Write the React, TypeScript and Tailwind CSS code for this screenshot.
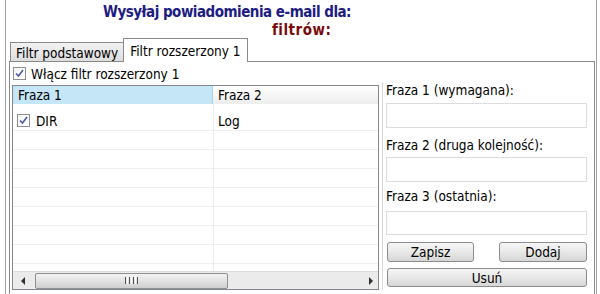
import React from "react";

const F = { fontFamily: '"DejaVu Sans Condensed", "DejaVu Sans", sans-serif' };

function Check() {
  return (
    <div className="w-[13px] h-[13px] border border-[#8f8f8f] bg-gradient-to-br from-[#f4f4f4] to-white flex items-center justify-center shrink-0">
      <svg width="9" height="9" viewBox="0 0 9 9">
        <path d="M1 4.5 L3.5 7 L8 1" stroke="#4a5ba8" strokeWidth="1.6" fill="none" />
      </svg>
    </div>
  );
}

function Btn({ children, className }: { children: React.ReactNode; className?: string }) {
  return (
    <div
      className={
        "border border-[#8c8c8c] rounded-[3px] bg-gradient-to-b from-[#f6f6f6] via-[#e8e8e8] to-[#d6d6d6] flex items-center justify-center text-black " +
        (className || "")
      }
    >
      {children}
    </div>
  );
}

export default function App() {
  const rows = [1, 2, 3, 4, 5, 6, 7, 8];
  return (
    <div style={F} className="w-[600px] h-[294px] bg-white overflow-hidden text-[13.5px] leading-[16px] text-black">
      <div className="ml-[5px] mr-[3px] h-full border-l border-r border-[#a0a0a0] flex flex-col">
        <div className="h-[38px] shrink-0 relative font-bold text-[15px] leading-[15px]">
          <div className="absolute left-[97px] top-[5px] text-[#1c1c84] tracking-[-0.5px]">Wysyłaj powiadomienia e-mail dla:</div>
          <div className="absolute left-[266px] top-[23px] text-[#7a0a0a] tracking-[0.5px]">filtrów:</div>
        </div>
        <div className="flex items-end h-[24px] shrink-0 pl-[4px] relative">
          <div className="h-[20px] px-[5px] border border-[#8a8a8a] border-b-0 bg-gradient-to-b from-[#f2f2f2] to-[#dcdcdc] flex items-center">
            Filtr podstawowy
          </div>
          <div className="h-[24px] px-[6px] border border-[#8a8a8a] border-b-0 bg-white flex items-center -ml-[1px] relative z-10">
            Filtr rozszerzony 1
          </div>
          <div className="absolute left-[3px] right-[1px] bottom-0 border-b border-[#8a8a8a]" />
        </div>
        <div className="flex-1 ml-[3px] mr-[1px] border-l border-r border-[#8a8a8a] flex flex-col pl-[2px] pr-[3px]">
          <div className="h-[23px] shrink-0 flex items-center gap-[5px] pl-[1px]">
            <Check />
            <span>Włącz filtr rozszerzony 1</span>
          </div>
          <div className="flex gap-[3px]">
            <div className="w-[367px] h-[205px] border border-[#828790] flex flex-col">
              <div className="flex h-[18px] shrink-0">
                <div className="w-[200px] bg-[#c4e6f6] border-r border-[#a8d2e8] pl-[5px] flex items-center">Fraza 1</div>
                <div className="flex-1 bg-gradient-to-b from-white to-[#ededed] pl-[5px] flex items-center">Fraza 2</div>
              </div>
              <div className="flex-1 flex flex-col relative overflow-hidden">
                <div className="absolute left-[200px] top-0 bottom-0 border-l border-[#ececec]" />
                <div className="h-[27px] shrink-0 flex items-end border-b border-[#efefef]">
                  <div className="h-[19px] w-full flex items-center">
                    <div className="w-[200px] pl-[4px] flex items-center gap-[6px]">
                      <Check />
                      <span>DIR</span>
                    </div>
                    <div className="pl-[5px]">Log</div>
                  </div>
                </div>
                {rows.map((r) => (
                  <div key={r} className="h-[19px] shrink-0 border-b border-[#efefef]" />
                ))}
              </div>
              <div className="h-[18px] shrink-0 bg-[#ebebeb] border-t border-[#dcdcdc] flex items-center">
                <div className="w-[20px] flex items-center justify-center">
                  <svg width="5" height="8" viewBox="0 0 5 8"><path d="M4 0 L0 4 L4 8Z" fill="#303030" /></svg>
                </div>
                <div className="w-[2px]" />
                <div className="w-[193px] h-[16px] border border-[#8e8f8f] rounded-[2px] bg-gradient-to-b from-[#f2f2f2] via-[#e2e2e2] to-[#cfcfcf] flex items-center justify-center gap-[1px]">
                  <div className="w-[1px] h-[7px] bg-[#555]" />
                  <div className="w-[1px] h-[7px] bg-[#fff]" />
                  <div className="w-[1px] h-[7px] bg-[#555]" />
                  <div className="w-[1px] h-[7px] bg-[#fff]" />
                  <div className="w-[1px] h-[7px] bg-[#555]" />
                  <div className="w-[1px] h-[7px] bg-[#fff]" />
                  <div className="w-[1px] h-[7px] bg-[#555]" />
                </div>
                <div className="flex-1" />
                <div className="w-[16px] flex items-center justify-center">
                  <svg width="5" height="8" viewBox="0 0 5 8"><path d="M1 0 L5 4 L1 8Z" fill="#303030" /></svg>
                </div>
              </div>
            </div>
            <div className="flex-1 -mt-[3px] border-l border-[#d8d8d8] pl-[3px] pr-[4px] flex flex-col">
              <div className="h-[16px] flex items-center">Fraza 1 (wymagana):</div>
              <div className="h-[25px] mt-[5px] border border-[#dcdcdc] bg-white" />
              <div className="h-[16px] mt-[9px] flex items-center">Fraza 2 (druga kolejność):</div>
              <div className="h-[25px] mt-[4px] border border-[#dcdcdc] bg-white" />
              <div className="h-[16px] mt-[6px] flex items-center">Fraza 3 (ostatnia):</div>
              <div className="h-[24px] mt-[7px] border border-[#dcdcdc] bg-white" />
              <div className="flex justify-between mt-[7px] pl-[1px]">
                <Btn className="w-[87px] h-[20px]">Zapisz</Btn>
                <Btn className="w-[88px] h-[20px]">Dodaj</Btn>
              </div>
              <Btn className="mt-[6px] ml-[1px] h-[19px]">Usuń</Btn>
            </div>
          </div>
        </div>
      </div>
    </div>
  );
}
